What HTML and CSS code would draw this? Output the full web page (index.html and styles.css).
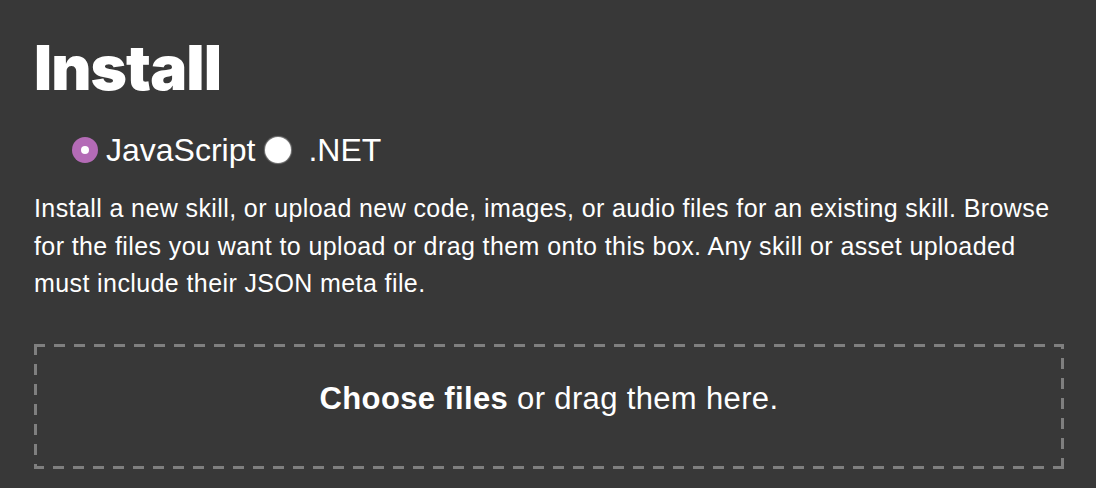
FILE: index.html
```html
<!DOCTYPE html>
<html lang="en">
<head>
<meta charset="utf-8">
<title>Install</title>
<link rel="stylesheet" href="styles.css">
</head>
<body>
<main class="page">
  <h1 class="title">Install</h1>
  <div class="lang-options" role="radiogroup">
    <label class="radio-option">
      <span class="radio is-checked"></span>
      <span class="radio-label">JavaScript</span>
    </label>
    <label class="radio-option radio-option--net">
      <span class="radio"></span>
      <span class="radio-label">.NET</span>
    </label>
  </div>
  <p class="intro">Install a new skill, or upload new code, images, or audio files for an existing skill. Browse for the files you want to upload or drag them onto this box. Any skill or asset uploaded must include their JSON meta file.</p>
  <div class="dropzone">
    <span class="dropzone-text"><strong>Choose files</strong> or drag them here.</span>
  </div>
</main>
</body>
</html>
```

FILE: styles.css
```css
html, body {
  margin: 0;
  padding: 0;
  background: #383838;
}

body {
  color: #ffffff;
  font-family: "Helvetica Neue", Helvetica, "Liberation Sans", Arial, sans-serif;
}

.page {
  padding: 36px 32px 0 34px;
}

.title {
  margin: 0;
  font-family: Inter, Lato, sans-serif;
  font-weight: 900;
  font-size: 62px;
  line-height: 63px;
  letter-spacing: -0.9px;
}

.lang-options {
  display: flex;
  align-items: center;
  height: 40px;
  margin-top: 31px;
  padding-left: 38px;
}

.radio-option {
  display: flex;
  align-items: center;
  gap: 8px;
}

.radio-option--net {
  margin-left: 10px;
  gap: 17px;
}

.radio {
  width: 26px;
  height: 26px;
  border-radius: 50%;
  background: #ffffff;
  box-shadow: 0 0 1px 1px rgba(255, 255, 255, 0.35);
  box-sizing: border-box;
  position: relative;
  flex: none;
}

.radio.is-checked {
  background: #b46bb6;
  box-shadow: none;
}

.radio.is-checked::after {
  content: "";
  position: absolute;
  left: 9px;
  top: 9px;
  width: 8px;
  height: 8px;
  border-radius: 50%;
  background: #ffffff;
}

.radio-label {
  font-size: 32px;
  line-height: 40px;
}

.intro {
  margin: 20px 0 0 0;
  font-size: 25px;
  line-height: 37.5px;
  letter-spacing: 0.4px;
}

.dropzone {
  margin-top: 41px;
  padding: 35px 0 50px 0;
  text-align: center;
  background:
    repeating-linear-gradient(to right, #7f7f7f 0 11px, transparent 11px 20px) left top / 100% 3px no-repeat,
    repeating-linear-gradient(to left, #7f7f7f 0 11px, transparent 11px 20px) left bottom / 100% 3px no-repeat,
    repeating-linear-gradient(to bottom, #7f7f7f 0 11px, transparent 11px 20px) left top / 3px 100% no-repeat,
    repeating-linear-gradient(to top, #7f7f7f 0 11px, transparent 11px 20px) right bottom / 3px 100% no-repeat;
}

.dropzone-text {
  font-size: 31px;
  line-height: 40px;
  letter-spacing: 0.35px;
}

.dropzone-text strong {
  font-weight: 700;
}
```
